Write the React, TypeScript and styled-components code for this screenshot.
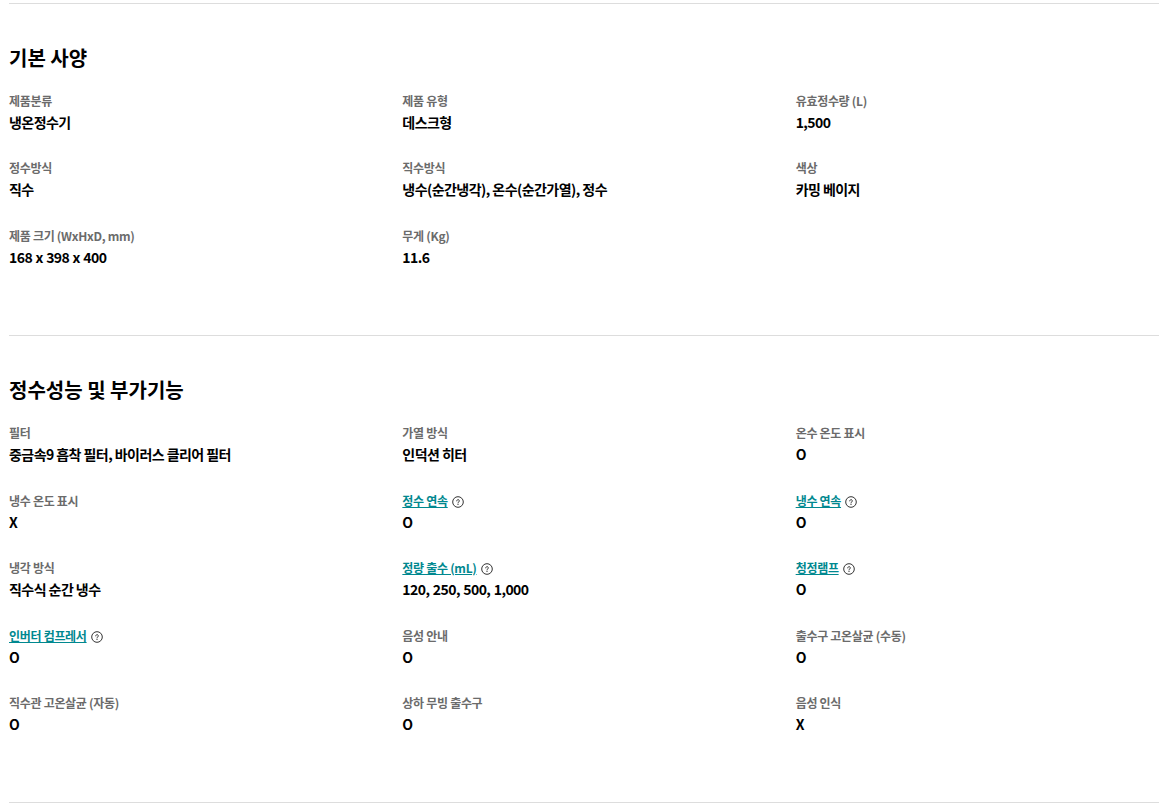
import React from 'react';
import styled, { createGlobalStyle } from 'styled-components';

interface Spec {
  label: string;
  value: string;
  help?: boolean;
  numeric?: boolean;
}

const BASIC_SPECS: Spec[] = [
  { label: '제품분류', value: '냉온정수기' },
  { label: '제품 유형', value: '데스크형' },
  { label: '유효정수량 (L)', value: '1,500', numeric: true },
  { label: '정수방식', value: '직수' },
  { label: '직수방식', value: '냉수(순간냉각), 온수(순간가열), 정수' },
  { label: '색상', value: '카밍 베이지' },
  { label: '제품 크기 (WxHxD, mm)', value: '168 x 398 x 400', numeric: true },
  { label: '무게 (Kg)', value: '11.6', numeric: true },
];

const FEATURE_SPECS: Spec[] = [
  { label: '필터', value: '중금속9 흡착 필터, 바이러스 클리어 필터' },
  { label: '가열 방식', value: '인덕션 히터' },
  { label: '온수 온도 표시', value: 'O' },
  { label: '냉수 온도 표시', value: 'X' },
  { label: '정수 연속', value: 'O', help: true },
  { label: '냉수 연속', value: 'O', help: true },
  { label: '냉각 방식', value: '직수식 순간 냉수' },
  { label: '정량 출수 (mL)', value: '120, 250, 500, 1,000', help: true, numeric: true },
  { label: '청정램프', value: 'O', help: true },
  { label: '인버터 컴프레서', value: 'O', help: true },
  { label: '음성 안내', value: 'O' },
  { label: '출수구 고온살균 (수동)', value: 'O' },
  { label: '직수관 고온살균 (자동)', value: 'O' },
  { label: '상하 무빙 출수구', value: 'O' },
  { label: '음성 인식', value: 'X' },
];

const GlobalStyle = createGlobalStyle`
  html, body {
    margin: 0;
    padding: 0;
    background: #fff;
    font-family: "Noto Sans CJK KR", "Noto Sans", sans-serif;
  }
`;

const Page = styled.main`
  padding: 3px 7px 0 9px;
`;

const Section = styled.section`
  border-top: 1px solid #ddd;
  padding: 39px 0 67px;

  &:first-of-type {
    padding-bottom: 67.5px;
  }

  &:last-of-type {
    padding: 0;
    height: 1px;
  }
`;

const Title = styled.h2`
  margin: 0 0 20px;
  font-size: 20px;
  line-height: 29px;
  font-weight: 700;
  color: #000;

  section:first-of-type > & {
    margin-bottom: 19.5px;
  }
`;

const Grid = styled.dl`
  margin: 0;
  display: grid;
  grid-template-columns: repeat(3, 1fr);
  column-gap: 30px;
  row-gap: 26.5px;
`;

const LabelRow = styled.dt`
  display: flex;
  align-items: center;
  gap: 4px;
  height: 18px;
  margin-bottom: 2px;
`;

const Label = styled.span<{ $link?: boolean }>`
  font-size: 12px;
  line-height: 18px;
  font-weight: 700;
  letter-spacing: -0.3px;
  color: ${p => (p.$link ? '#00888f' : '#6b6b6b')};
  text-decoration: ${p => (p.$link ? 'underline' : 'none')};
`;

const Value = styled.dd<{ $numeric?: boolean }>`
  margin: 0;
  font-size: 14px;
  line-height: 21px;
  font-weight: 700;
  letter-spacing: -0.04em;
  word-spacing: ${p => (p.$numeric ? '0.75px' : '0')};
  color: #000;
`;

const HelpSvg = styled.svg`
  flex: none;
  margin-top: 2px;
`;

const HelpIcon = () => (
  <HelpSvg width="12" height="12" viewBox="0 0 12 12" fill="none" stroke="#333" strokeWidth="1">
    <circle cx="6" cy="6" r="5.3" />
    <path d="M4.7 4.9a1.3 1.3 0 1 1 2.1 1c-.5.3-.8.5-.8 1" strokeLinecap="round" />
    <circle cx="6" cy="8.4" r=".55" fill="#333" stroke="none" />
  </HelpSvg>
);

const SpecGrid: React.FC<{ specs: Spec[] }> = ({ specs }) => (
  <Grid>
    {specs.map(spec => (
      <div key={spec.label}>
        <LabelRow>
          <Label $link={spec.help}>{spec.label}</Label>
          {spec.help && <HelpIcon />}
        </LabelRow>
        <Value $numeric={spec.numeric}>{spec.value}</Value>
      </div>
    ))}
  </Grid>
);

const App: React.FC = () => (
  <>
    <GlobalStyle />
    <Page>
      <Section>
        <Title>기본 사양</Title>
        <SpecGrid specs={BASIC_SPECS} />
      </Section>
      <Section>
        <Title>정수성능 및 부가기능</Title>
        <SpecGrid specs={FEATURE_SPECS} />
      </Section>
      <Section />
    </Page>
  </>
);

export default App;
